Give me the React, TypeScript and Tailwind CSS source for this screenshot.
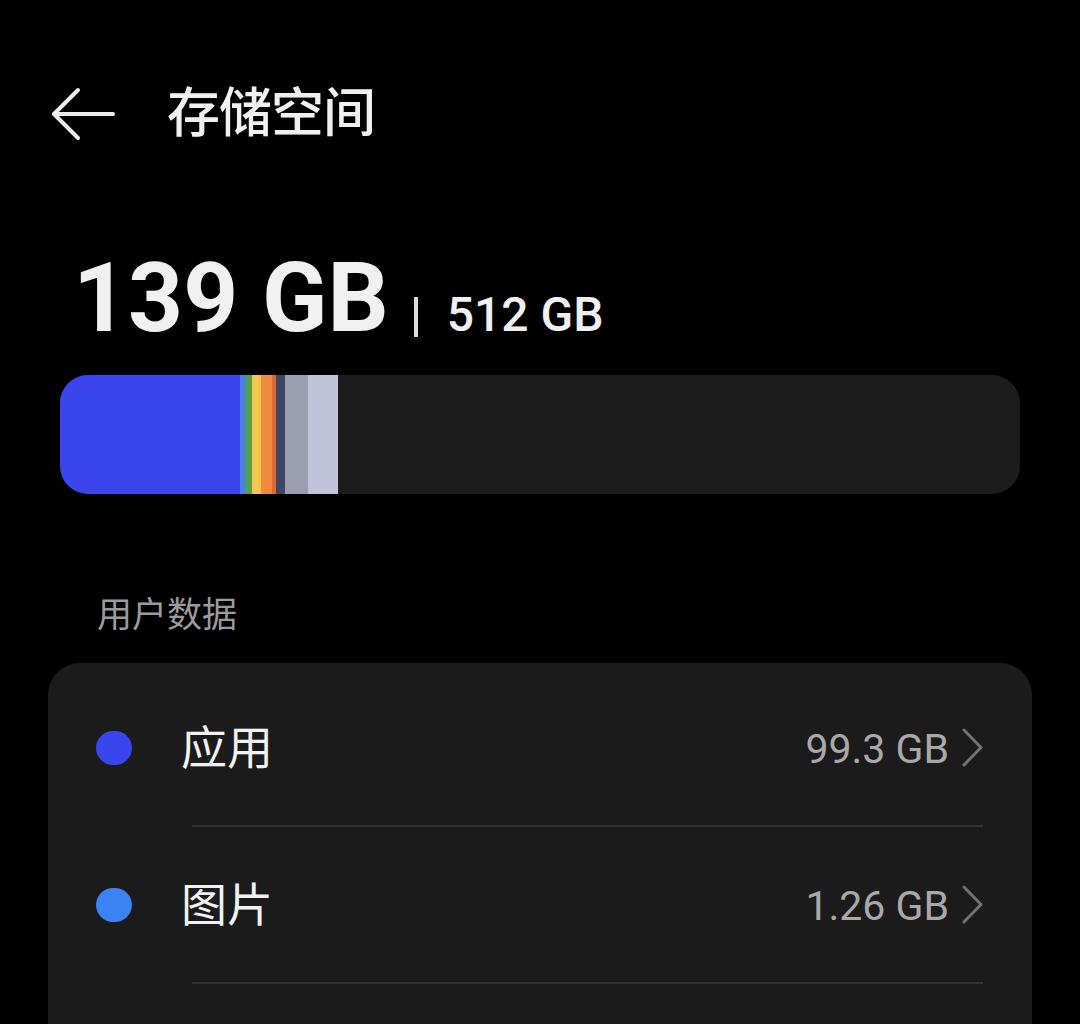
import React from "react";

const segments: { w: number; c: string }[] = [
  { w: 180, c: "#3a45ee" },
  { w: 5, c: "#4a7ff2" },
  { w: 7, c: "#55a04e" },
  { w: 9, c: "#f6c74c" },
  { w: 11, c: "#f08a3c" },
  { w: 4, c: "#dc6a32" },
  { w: 9, c: "#3c4562" },
  { w: 23, c: "#9a9eaf" },
  { w: 30, c: "#c2c5da" },
];

function Chevron() {
  return (
    <svg width="23" height="39" viewBox="0 0 23 39" className="ml-[12px] shrink-0">
      <polyline
        points="3,2 20,19.5 3,37"
        fill="none"
        stroke="#727272"
        strokeWidth="3"
        strokeLinecap="round"
        strokeLinejoin="round"
      />
    </svg>
  );
}

function Row({ dot, name, value }: { dot: string; name: string; value: string }) {
  return (
    <div className="h-[155px] flex items-center pl-[48px] pr-[48px]">
      <div className={`w-[36px] h-[34px] rounded-full shrink-0 ${dot}`} />
      <div className="ml-[49px] text-[46px] leading-none text-[#f2f2f2]">{name}</div>
      <div className="flex-1" />
      <div className="text-[41px] leading-none text-[#a9a9a9] pt-[4px]">{value}</div>
      <Chevron />
    </div>
  );
}

export default function App() {
  return (
    <div className="w-[1080px] h-[1024px] overflow-hidden bg-black font-['Roboto','Noto_Sans_CJK_SC',sans-serif] pt-[74px]">
      {/* Header */}
      <div className="h-[80px] flex items-center pl-[50px]">
        <svg width="66" height="60" viewBox="0 0 66 60" className="shrink-0 -mt-[4px]">
          <g fill="none" stroke="#ededed" strokeWidth="4" strokeLinecap="round" strokeLinejoin="round">
            <line x1="4" y1="32" x2="63" y2="32" />
            <polyline points="28,8 4,32 28,56" />
          </g>
        </svg>
        <div className="ml-[51px] text-[53px] leading-none font-medium text-[#f0f0f0] tracking-[-1px]">
          存储空间
        </div>
      </div>

      {/* Usage */}
      <div className="mt-[96px] pl-[73px] flex items-baseline text-[#f0f0f0]">
        <span className="text-[96px] leading-none font-bold">139 GB</span>
        <span className="text-[48px] leading-none font-medium ml-[25px]">
          <span className="inline-block w-[4px] h-[40px] bg-[#dcdcdc] align-[-6px] mr-[29px]" />
          512 GB
        </span>
      </div>

      {/* Bar */}
      <div className="px-[60px] mt-[29px]">
        <div className="h-[119px] rounded-[28px] bg-[#1c1c1c] overflow-hidden flex">
          {segments.map((s, i) => (
            <div key={i} className="h-full shrink-0" style={{ width: s.w, background: s.c }} />
          ))}
        </div>
      </div>

      {/* Section label */}
      <div className="mt-[101px] h-[40px] flex items-center pl-[97px] text-[35px] leading-none text-[#9b9b9b]">
        用户数据
      </div>

      {/* Card */}
      <div className="mt-[28px] mx-[48px] bg-[#1b1b1b] rounded-t-[32px] pt-[7px] pb-[60px]">
        <Row dot="bg-[#3a45ee]" name="应用" value="99.3 GB" />
        <div className="h-[2px] bg-[#333333] ml-[144px] mr-[49px]" />
        <Row dot="bg-[#3b82f3]" name="图片" value="1.26 GB" />
        <div className="h-[2px] bg-[#333333] ml-[144px] mr-[49px]" />
      </div>
    </div>
  );
}
